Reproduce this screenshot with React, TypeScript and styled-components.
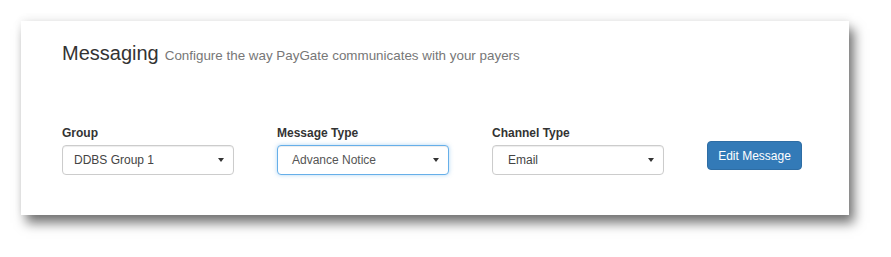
import React from "react";
import styled, { createGlobalStyle } from "styled-components";

const GlobalStyle = createGlobalStyle`
  html, body {
    margin: 0;
    padding: 0;
    background: #ffffff;
  }
  body {
    font-family: "Liberation Sans", Arial, sans-serif;
  }
`;

const Page = styled.div`
  width: 891px;
  height: 257px;
  padding: 21px 0 0 21px;
  box-sizing: border-box;
`;

const Card = styled.div`
  width: 828px;
  height: 194px;
  box-sizing: border-box;
  padding: 20px 0 0 41px;
  background: #fff;
  box-shadow: 5px 8px 11px rgba(0, 0, 0, 0.55), 0 -2px 8px rgba(0, 0, 0, 0.06);
`;

const Heading = styled.div`
  display: flex;
  align-items: baseline;
  gap: 6px;
  line-height: 24px;
`;

const Title = styled.h1`
  margin: 0;
  font-size: 20px;
  font-weight: normal;
  color: #333;
`;

const Subtitle = styled.span`
  font-size: 13.4px;
  color: #777;
`;

const Fields = styled.div`
  display: grid;
  grid-template-columns: repeat(4, 172px);
  column-gap: 43px;
  margin-top: 56px;
`;

const Field = styled.div`
  display: flex;
  flex-direction: column;
`;

const Label = styled.label`
  font-size: 12px;
  font-weight: bold;
  line-height: 18px;
  color: #333;
  margin-bottom: 3px;
`;

const Select = styled.div<{ $focused?: boolean; $indent: number }>`
  height: 30px;
  box-sizing: border-box;
  display: flex;
  align-items: center;
  justify-content: space-between;
  padding: 0 9px 0 ${(p) => p.$indent}px;
  font-size: 12px;
  color: ${(p) => (p.$focused ? "#555" : "#444")};
  border: 1px solid ${(p) => (p.$focused ? "#66afe9" : "#ccc")};
  border-radius: 4px;
  background: #fff;
  box-shadow: ${(p) =>
    p.$focused
      ? "inset 0 1px 1px rgba(0,0,0,.075), 0 0 4px rgba(102,175,233,.5)"
      : "inset 0 1px 1px rgba(0,0,0,.075)"};
`;

const Arrow = styled.svg`
  width: 6px;
  height: 4px;
  fill: #333;
`;

const Button = styled.button`
  margin-top: 17px;
  width: 95px;
  height: 29px;
  padding: 0;
  border: 1px solid #2e6da4;
  border-radius: 4px;
  background: #337ab7;
  color: #fff;
  font-family: "Liberation Sans", Arial, sans-serif;
  font-size: 12px;
  justify-self: start;
`;

const fields = [
  { label: "Group", value: "DDBS Group 1", indent: 11, focused: false },
  { label: "Message Type", value: "Advance Notice", indent: 14, focused: true },
  { label: "Channel Type", value: "Email", indent: 15, focused: false },
];

export default function App() {
  return (
    <Page>
      <GlobalStyle />
      <Card>
        <Heading>
          <Title>Messaging</Title>
          <Subtitle>Configure the way PayGate communicates with your payers</Subtitle>
        </Heading>
        <Fields>
          {fields.map((f) => (
            <Field key={f.label}>
              <Label>{f.label}</Label>
              <Select $focused={f.focused} $indent={f.indent}>
                <span>{f.value}</span>
                <Arrow viewBox="0 0 6 4">
                  <path d="M0 0h6L3 4z" />
                </Arrow>
              </Select>
            </Field>
          ))}
          <Button>Edit Message</Button>
        </Fields>
      </Card>
    </Page>
  );
}
